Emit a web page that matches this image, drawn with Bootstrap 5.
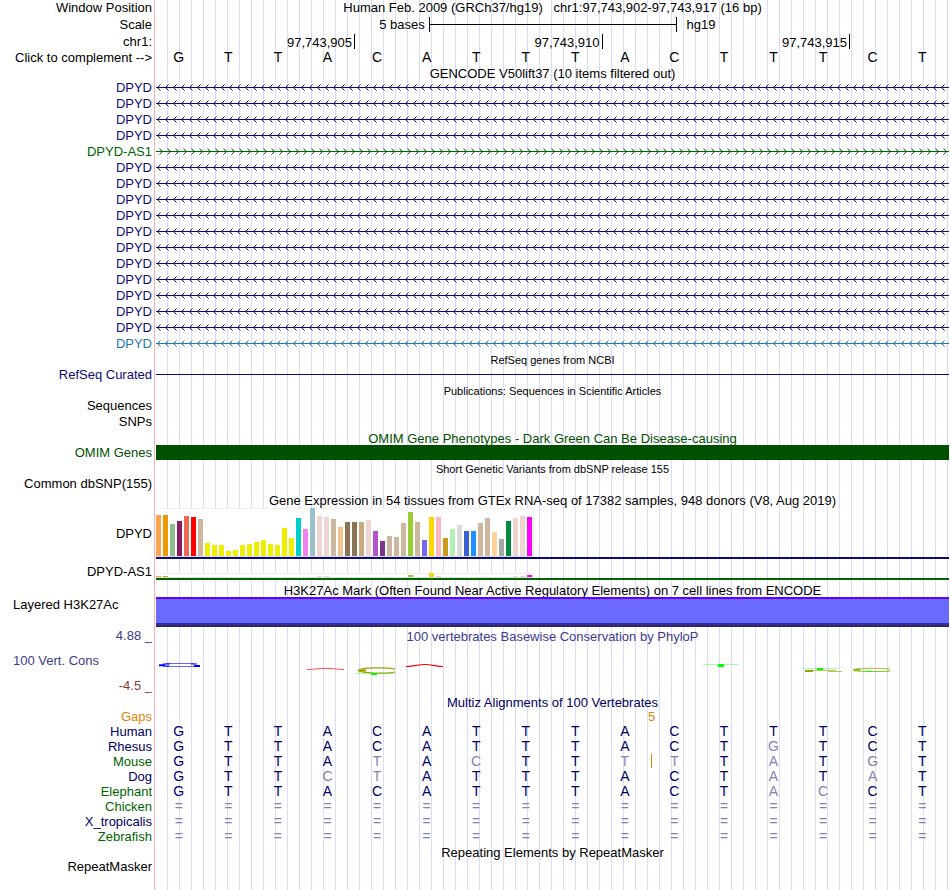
<!DOCTYPE html>
<html lang="en">
<head>
<meta charset="utf-8">
<meta name="viewport" content="width=device-width, initial-scale=1">
<title>Genome Browser hg19 chr1:97,743,902-97,743,917</title>
<link href="https://cdn.jsdelivr.net/npm/bootstrap@5.3.0/dist/css/bootstrap.min.css" rel="stylesheet">
<style>
  :root { --gutter: 156px; --grid: #dcdcf8; --navy: #0c0c78; --green: #006400; --sky: #1e78b4; }
  body { font-family: "Liberation Sans", Arial, sans-serif; font-size: 13px; line-height: 16px; color: #000; background: #fff; }
  .browser {
    padding-right: 1px;
    background:
      linear-gradient(#ffb4b4, #ffb4b4) 154px 0 / 1px 100% no-repeat,
      repeating-linear-gradient(90deg, transparent 0 11px, var(--grid) 11px 12px) 156px 0 / calc(100% - 157px) 100% no-repeat;
  }
  .track-label { flex: 0 0 var(--gutter); width: var(--gutter); padding-right: 4px; text-align: right; white-space: nowrap; }
  .track-label.from-left { padding-left: 13px; text-align: left; }
  .track-body { flex: 1 1 0; min-width: 0; }
  .track-title { font-size: 13px; line-height: 17px; height: 15px; font-weight: 400; margin: 0 0 0 var(--gutter); text-align: center; white-space: nowrap; }
  .track-title.minor { font-size: 11px; }
  .track-title.tight { line-height: 16px; height: 14px; }
  .track-title.roomy { line-height: 18px; height: 16px; }
  .track-title.lowered { padding-top: 3px; height: 17px; }
  .header-row { height: 17px; }
  .gene svg { display: block; width: 100%; height: 16px; }
  .c-navy { color: var(--navy); } .c-green { color: var(--green); } .c-sky { color: var(--sky); }
  .c-omim { color: #005000; } .c-cons { color: #3c3c8c; } .c-neg { color: #8c3c3c; }
  .c-gap { color: #e68200; } .c-multiz { color: #000064; }
  .scale-left { flex: 0 0 34.4%; padding-right: 4px; }
  .scale-bar { flex: 0 0 31.25%; border: solid #000; border-width: 0 1px; height: 15px; }
  .scale-bar span { height: 1px; background: #000; }
  .scale-right { padding-left: 10px; }
  .ticks { display: grid; grid-template-columns: 4fr 5fr 5fr 2fr; padding-left: 1px; }
  .tick { border-right: 1px solid #000; padding-right: 2px; text-align: right; height: 15px; line-height: 17px; }
  .bases { width: calc(100% - 2px); table-layout: fixed; border-collapse: collapse; line-height: 15px; }
  .bases th { width: 154px; font-weight: 400; text-align: right; padding: 0 2px 0 0; white-space: nowrap; }
  .bases td { text-align: center; padding: 0; height: 15px; font-size: 14px; }
  .bases .c-gap td { font-size: 13px; }
  .bases.ref th { line-height: 16px; }
  .bases.ref td { height: 16px; line-height: 14px; vertical-align: top; }
  .bases .dim { color: #8282b4; }
  .bases .insertion { background: linear-gradient(#e68200, #e68200) 1px 0 / 1px 14px no-repeat; }
  .rule-line { height: 1px; background: var(--navy); margin-bottom: 2px; }
  .omim-bar { height: 15px; background: #005000; }
  .expr { border-bottom: 2px solid var(--navy); }
  .expr.antisense { border-color: var(--green); padding-top: 14px; }
  .expr-box { background: #fff; border: 1px solid #f0f0f0; border-left: 0; border-bottom-color: #dcdcdc; width: 378px; height: 49px; }
  .antisense .expr-box { height: 5px; }
  .expr-box i { flex: 0 0 5px; margin-right: 2px; }
  .h3k { height: 30px; background: #6a6aff; border-top: 2px solid #6400ff; border-bottom: 2px solid #30285a; box-shadow: inset 0 -2px #322da0; }
  .cons { height: 67px; padding-top: 1px; }
  .cons .from-left { padding-left: 13px; }
  .cons svg { display: block; width: 100%; height: 20px; margin-top: 16px; }
</style>
</head>
<body>
<svg width="0" height="0" class="position-absolute" aria-hidden="true">
  <defs>
    <path id="chevron-left" d="M1 7h1v1h-1zM2 6h1v1h-1zM2 8h1v1h-1zM3 5h1v1h-1zM3 9h1v1h-1z"/>
    <path id="chevron-left-ends" d="M4 4h1v1h-1zM4 10h1v1h-1z" opacity=".5"/>
    <pattern id="navy-left" width="8" height="16" patternUnits="userSpaceOnUse"><g fill="#0c0c78"><path d="M0 7h8v1H0z"/><use href="#chevron-left"/><use href="#chevron-left-ends"/></g></pattern>
    <pattern id="sky-left" width="8" height="16" patternUnits="userSpaceOnUse"><g fill="#1e78b4"><path d="M0 7h8v1H0z"/><use href="#chevron-left"/><use href="#chevron-left-ends"/></g></pattern>
    <pattern id="green-right" width="8" height="16" patternUnits="userSpaceOnUse"><g fill="#006400"><path d="M0 7h8v1H0zM5 6h1v1h-1zM5 8h1v1h-1zM4 5h1v1h-1zM4 9h1v1h-1z"/><path d="M3 4h1v1h-1zM3 10h1v1h-1z" opacity=".5"/></g></pattern>
  </defs>
</svg>

<main class="browser min-vh-100">
  <header>
    <div class="d-flex header-row">
      <div class="track-label">Window Position</div>
      <div class="track-body text-center text-nowrap">Human Feb. 2009 (GRCh37/hg19)&nbsp;&nbsp; chr1:97,743,902-97,743,917 (16 bp)</div>
    </div>
    <div class="d-flex header-row">
      <div class="track-label">Scale</div>
      <div class="track-body d-flex">
        <div class="scale-left text-end">5 bases</div>
        <div class="scale-bar d-flex align-items-center"><span class="w-100"></span></div>
        <div class="scale-right">hg19</div>
      </div>
    </div>
    <div class="d-flex">
      <div class="track-label">chr1:</div>
      <div class="track-body ticks">
        <div class="tick">97,743,905</div><div class="tick">97,743,910</div><div class="tick">97,743,915</div>
      </div>
    </div>
  </header>
  <table class="bases ref"><tbody id="reference-bases"></tbody></table>

  <h2 class="track-title tight">GENCODE V50lift37 (10 items filtered out)</h2>
  <section id="genes"></section>

  <h2 class="track-title minor">RefSeq genes from NCBI</h2>
  <div class="d-flex align-items-center">
    <div class="track-label c-navy">RefSeq Curated</div><div class="track-body rule-line"></div>
  </div>

  <h2 class="track-title minor">Publications: Sequences in Scientific Articles</h2>
  <div class="track-label">Sequences</div>
  <div class="track-label">SNPs</div>

  <h2 class="track-title c-omim">OMIM Gene Phenotypes - Dark Green Can Be Disease-causing</h2>
  <div class="d-flex">
    <div class="track-label c-omim">OMIM Genes</div><div class="track-body omim-bar"></div>
  </div>

  <h2 class="track-title minor">Short Genetic Variants from dbSNP release 155</h2>
  <div class="track-label">Common dbSNP(155)</div>

  <h2 class="track-title roomy">Gene Expression in 54 tissues from GTEx RNA-seq of 17382 samples, 948 donors (V8, Aug 2019)</h2>
  <div class="d-flex">
    <div class="track-label align-self-center">DPYD</div>
    <div class="track-body expr"><div class="expr-box d-flex align-items-end" id="expr-dpyd"></div></div>
  </div>
  <div class="d-flex">
    <div class="track-label align-self-end">DPYD-AS1</div>
    <div class="track-body expr antisense"><div class="expr-box d-flex align-items-end" id="expr-as1"></div></div>
  </div>

  <h2 class="track-title tight lowered">H3K27Ac Mark (Often Found Near Active Regulatory Elements) on 7 cell lines from ENCODE</h2>
  <div class="d-flex">
    <div class="track-label from-left">Layered H3K27Ac</div><div class="track-body h3k"></div>
  </div>

  <div class="d-flex">
    <div class="track-label d-flex flex-column justify-content-between cons c-cons">
      <span>4.88 _</span>
      <span class="text-start from-left">100 Vert. Cons</span>
      <span class="c-neg">-4.5 _</span>
    </div>
    <div class="track-body cons">
      <h2 class="track-title roomy ms-0 c-cons">100 vertebrates Basewise Conservation by PhyloP</h2>
      <!-- flattened base letters, one per conserved or diverged position -->
      <svg viewBox="0 0 793 20" preserveAspectRatio="none" aria-hidden="true">
        <g fill="none" stroke="#0000ff">
          <path d="M10 3.5H38M10 6.5H38" stroke-opacity=".6"/>
          <path d="M3 5.200H9M38 6H44" stroke-width="2"/><path d="M7 4H14M7 6H13M35 4H41"/>
        </g>
        <path d="M151 9.500C158 9.500 164 8.300 170 8.300S182 9.500 188 9.500" fill="none" stroke="#ff2020" stroke-opacity=".8"/>
        <path d="M250 6.500C256 6.500 262 4.500 269 4.500S281 6.500 287 6.500" fill="none" stroke="#ff0000" stroke-width="1.200"/>
        <g fill="none" stroke="#a0a000">
          <path d="M239 9C232 7.300 204 7.300 203 10.300S232 14 239 12" stroke-width="1.200"/>
          <path d="M202 10.500H210" stroke-width="2"/>
          <path d="M649 11H657" stroke-width="2"/><path d="M656 10.500H680M672 11.500H686" stroke-opacity=".65"/>
          <path d="M734 9C724 8 700 8 698 9.700S724 12 734 11" stroke-opacity=".8"/>
          <path d="M697 9.700H704" stroke-width="1.500"/>
        </g>
        <path d="M200 13.500H238M547 4.500H583M646 8.500H682M698 11.500H734" stroke="#00ff00" stroke-opacity=".35"/>
        <path d="M215 13h6v2h-6zM562 4h6v3h-6zM661 8h6v2h-6zM710 11h6v1h-6z" fill="#00ff00"/>
      </svg>
    </div>
  </div>
  <h2 class="track-title c-multiz">Multiz Alignments of 100 Vertebrates</h2>
  <table class="bases c-multiz">
    <tbody id="alignment">
      <tr class="c-gap"><th scope="row">Gaps</th><td colspan="9"></td><td colspan="2" class="ps-1">5</td><td colspan="5"></td></tr>
    </tbody>
  </table>
  <h2 class="track-title">Repeating Elements by RepeatMasker</h2>
  <div class="track-label">RepeatMasker</div>
</main>

<script src="https://cdn.jsdelivr.net/npm/bootstrap@5.3.0/dist/js/bootstrap.bundle.min.js"></script>
<script>
  // Gene transcripts: one strand line per item
  const transcripts = [
    ...Array(4).fill(['DPYD', 'c-navy', 'navy-left']),
    ['DPYD-AS1', 'c-green', 'green-right'],
    ...Array(11).fill(['DPYD', 'c-navy', 'navy-left']),
    ['DPYD', 'c-sky', 'sky-left']
  ];
  document.getElementById('genes').innerHTML = transcripts.map(([name, color, strand]) =>
    `<div class="d-flex gene"><div class="track-label ${color}">${name}</div>` +
    `<div class="track-body"><svg aria-hidden="true"><rect width="100%" height="16" fill="url(#${strand})"/></svg></div></div>`).join('');

  // Base rows: lower case marks a mismatch with the reference
  function baseRow(name, color, bases, insertion) {
    const cells = [...bases].map((b, i) => {
      const classes = [];
      if (b === '=' || b !== b.toUpperCase()) classes.push('dim');
      if (i === insertion) classes.push('insertion');
      return `<td${classes.length ? ` class="${classes.join(' ')}"` : ''}>${b.toUpperCase()}</td>`;
    }).join('');
    return `<tr><th scope="row" class="${color}">${name}</th>${cells}</tr>`;
  }
  document.getElementById('reference-bases').innerHTML =
    baseRow('Click to complement --&gt;', '', 'GTTACATTTACTTTCT');
  document.getElementById('alignment').insertAdjacentHTML('beforeend', [
    ['Human', 'c-multiz', 'GTTACATTTACTTTCT'],
    ['Rhesus', 'c-multiz', 'GTTACATTTACTgTCT'],
    ['Mouse', 'c-green', 'GTTAtAcTTttTaTgT', 10],
    ['Dog', 'c-multiz', 'GTTctATTTACTaTaT'],
    ['Elephant', 'c-green', 'GTTACATTTACTacCT'],
    ['Chicken', 'c-green', '================'],
    ['X_tropicalis', 'c-multiz', '================'],
    ['Zebrafish', 'c-green', '================']
  ].map(row => baseRow(...row)).join(''));

  // Expression bars, one per tissue; the yellow run covers 13 brain regions
  const tissueColors = [
    '#ffa54f', '#ee9a00', '#8fbc8f', '#8b1c62', '#ee6a50', '#ff0000', '#cdb79e',
    ...Array(13).fill('#eeee00'),
    '#00cdcd', '#ee82ee', '#9ac0cd', '#eed5d2', '#eed5d2', '#cdb79e', '#eec591',
    '#8b7355', '#8b7355', '#cdaa7d', '#eed5d2', '#b452cd', '#7a378b', '#cdb79e', '#cdb79e', '#cdb79e',
    '#9acd32', '#cdb79e', '#7a67ee', '#ffd700', '#ffb6c1', '#cd9b1d', '#b4eeb4', '#d9d9d9',
    '#3a5fcd', '#1e90ff', '#cdb79e', '#cdb79e', '#ffd39b', '#a6a6a6', '#008b45', '#eed5d2', '#eed5d2', '#ff00ff'
  ];
  const dpyd = [41,41,32,35,40,39,37,13,11,11,5,6,11,12,14,16,12,11,28,18,38,27,48,40,39,37,29,
    34,34,34,36,25,15,20,19,33,44,34,16,39,39,18,27,31,25,25,33,38,24,17,35,38,40,39];
  const as1 = tissueColors.map((_, i) => ({0:1, 1:1, 23:1, 24:1, 36:2, 39:4, 40:1, 51:1, 52:1, 53:2})[i] || 0);
  const drawBars = (id, heights) => {
    document.getElementById(id).innerHTML = heights.map((h, i) =>
      `<i style="height:${h}px;background:${tissueColors[i]}"></i>`).join('');
  };
  drawBars('expr-dpyd', dpyd);
  drawBars('expr-as1', as1);
</script>
</body>
</html>
